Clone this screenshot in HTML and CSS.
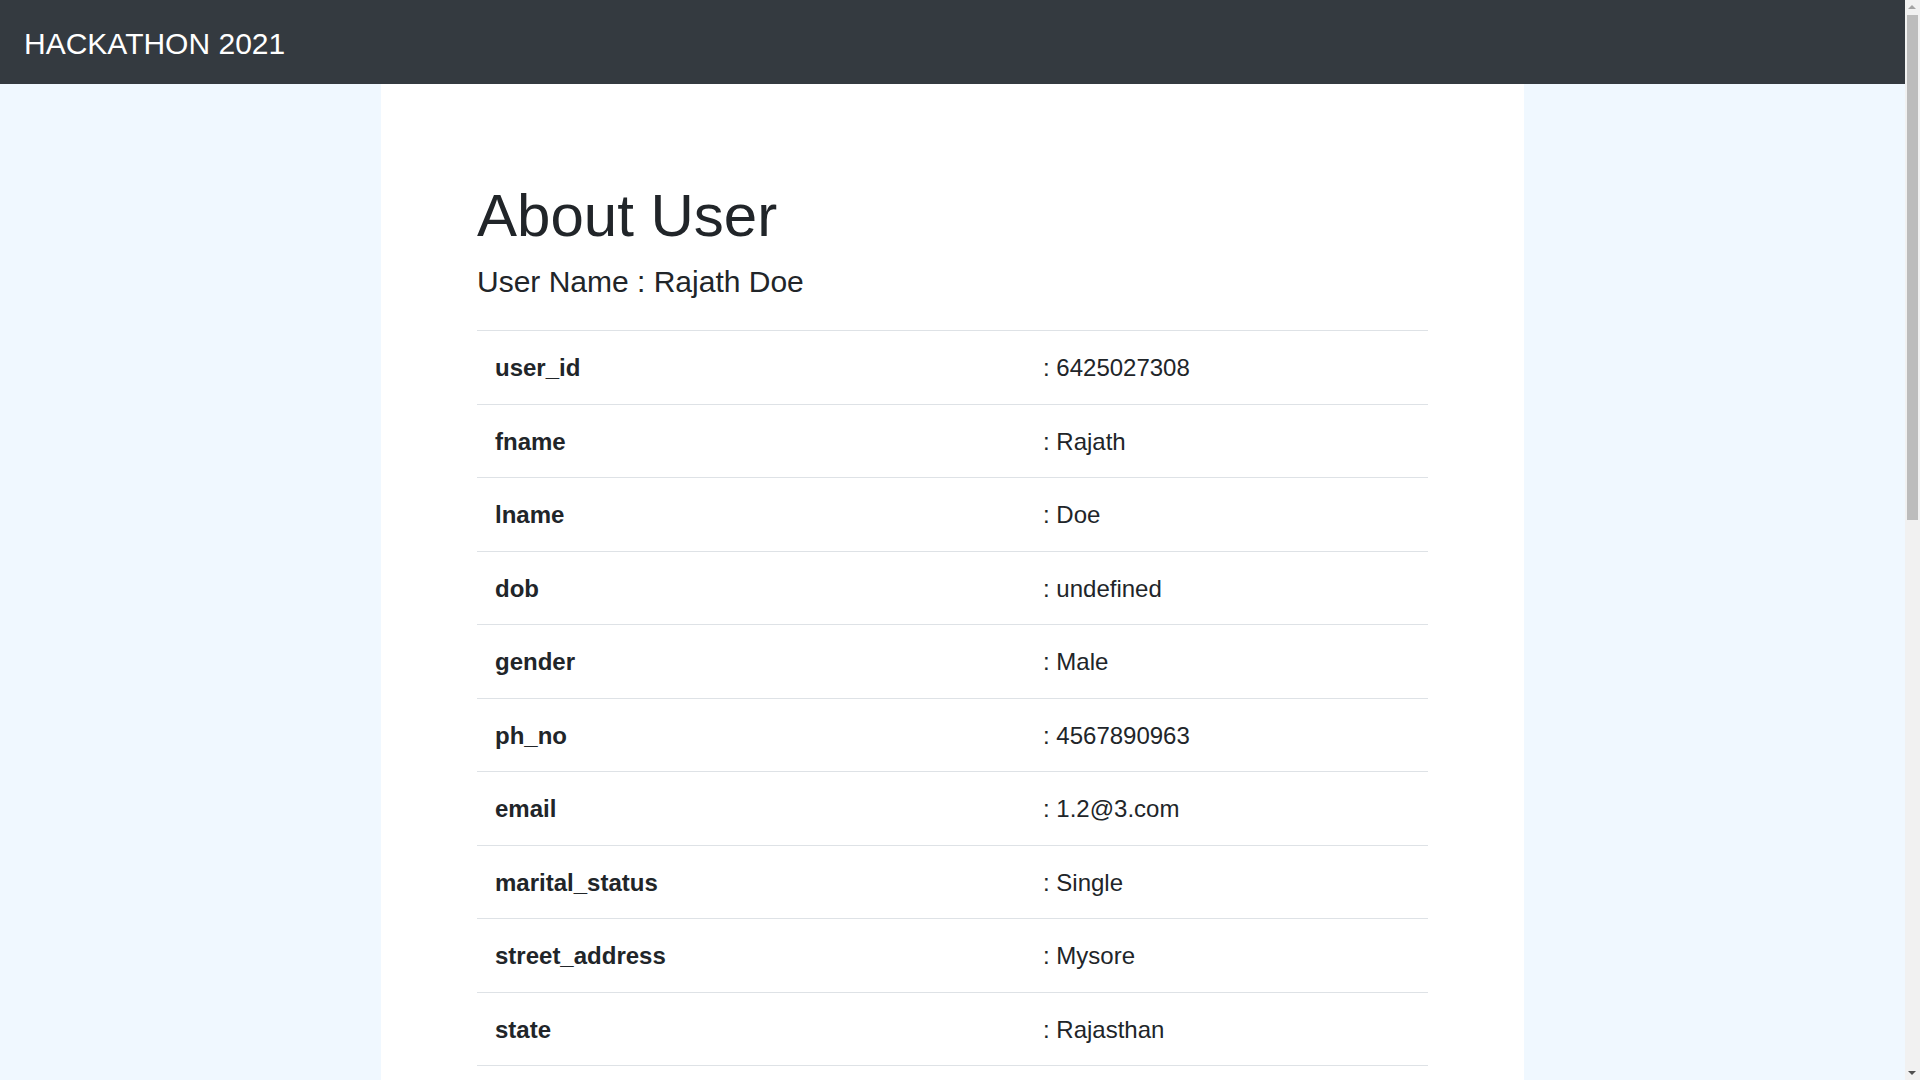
FILE: index.html
```html
<!DOCTYPE html>
<html lang="en">
<head>
<meta charset="utf-8">
<title>HACKATHON 2021</title>
<link rel="stylesheet" href="styles.css">
</head>
<body>
<div class="page">
  <nav class="navbar">
    <a class="brand" href="#">HACKATHON 2021</a>
  </nav>
  <main class="panel">
    <h1 class="title">About User</h1>
    <h5 class="subtitle">User Name : Rajath Doe</h5>
    <table class="info">
      <colgroup><col class="col-key"><col></colgroup>
      <tbody>
        <tr><th>user_id</th><td>: 6425027308</td></tr>
        <tr><th>fname</th><td>: Rajath</td></tr>
        <tr><th>lname</th><td>: Doe</td></tr>
        <tr><th>dob</th><td>: undefined</td></tr>
        <tr><th>gender</th><td>: Male</td></tr>
        <tr><th>ph_no</th><td>: 4567890963</td></tr>
        <tr><th>email</th><td>: 1.2@3.com</td></tr>
        <tr><th>marital_status</th><td>: Single</td></tr>
        <tr><th>street_address</th><td>: Mysore</td></tr>
        <tr><th>state</th><td>: Rajasthan</td></tr>
      </tbody>
    </table>
  </main>
</div>
<div class="scrollbar" aria-hidden="true">
  <span class="sb-up"></span>
  <span class="sb-thumb"></span>
  <span class="sb-down"></span>
</div>
</body>
</html>
```
FILE: styles.css
```css
* { box-sizing: border-box; }

html, body {
  margin: 0;
  padding: 0;
}

body {
  background: #f0f8ff;
  color: #212529;
  font-family: "Liberation Sans", Arial, Helvetica, sans-serif;
  font-size: 24px;
  line-height: 1.5;
}

.page {
  width: calc(100% - 15px);
}

.navbar {
  display: flex;
  align-items: center;
  height: 84px;
  padding: 0 24px;
  background: #343a40;
}

.brand {
  color: #fff;
  text-decoration: none;
  font-size: 30px;
  line-height: 45px;
  padding-top: 2px;
}

.panel {
  width: 60%;
  margin: 0 auto;
  background: #fff;
  padding: 96px;
  min-height: 1200px;
}

.title {
  margin: 0 0 12px;
  font-size: 60px;
  font-weight: 500;
  line-height: 72px;
}

.subtitle {
  margin: 0 0 30px;
  font-size: 30px;
  font-weight: 500;
  line-height: 36px;
}

.info {
  width: 100%;
  border-collapse: collapse;
  table-layout: fixed;
  border-bottom: 1px solid #dee2e6;
}

.col-key { width: 548px; }

.info th,
.info td {
  text-align: left;
  padding: 19px 18px 17.5px;
  line-height: 36px;
  font-size: 24px;
  border-top: 1px solid #dee2e6;
  vertical-align: top;
}

.info th { font-weight: 700; }
.info td { font-weight: 400; }

/* browser scrollbar, as seen in the screenshot */
.scrollbar {
  position: fixed;
  top: 0;
  right: 0;
  width: 15px;
  height: 100%;
  background: #f1f1f1;
}

.sb-thumb {
  position: absolute;
  left: 2px;
  top: 15px;
  width: 11px;
  height: 505px;
  background: #bcbcbc;
}

.sb-up,
.sb-down {
  position: absolute;
  left: 3px;
  width: 0;
  height: 0;
  border-left: 4.5px solid transparent;
  border-right: 4.5px solid transparent;
}

.sb-up {
  top: 5px;
  border-bottom: 4px solid #a3a3a3;
}

.sb-down {
  bottom: 5px;
  border-top: 4px solid #505050;
}
```
